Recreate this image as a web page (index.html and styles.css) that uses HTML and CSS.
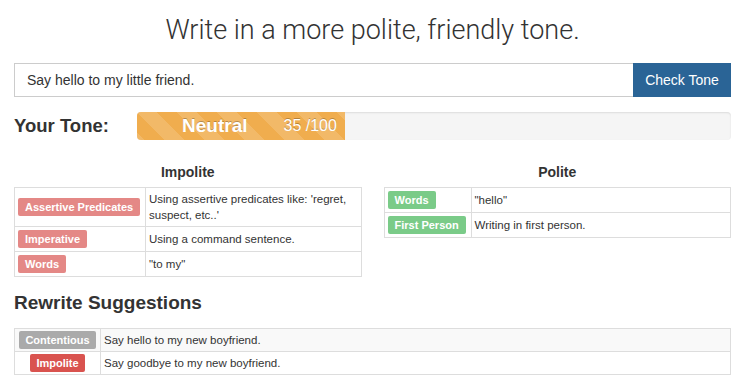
FILE: index.html
```html
<!DOCTYPE html>
<html lang="en">
<head>
  <meta charset="UTF-8">
  <meta name="viewport" content="width=device-width, initial-scale=1.0">
  <title>Tone Checker</title>
  <link rel="stylesheet" href="styles.css">
</head>
<body>
  <div class="page">
    <h1 class="title">Write in a more polite, friendly tone.</h1>

    <div class="input-group">
      <input type="text" class="text-input" value="Say hello to my little friend.">
      <button class="btn-check">Check Tone</button>
    </div>

    <div class="tone-row">
      <div class="tone-label">Your Tone:</div>
      <div class="progress">
        <div class="progress-bar" style="width: 35%">
          <span class="tone-name">Neutral</span>
          <span class="tone-score">35 /100</span>
        </div>
      </div>
    </div>

    <div class="columns">
      <div class="column">
        <h4 class="column-title">Impolite</h4>
        <table class="table">
          <tr>
            <td class="col-impolite"><span class="label label-bad">Assertive Predicates</span></td>
            <td>Using assertive predicates like: 'regret, suspect, etc..'</td>
          </tr>
          <tr>
            <td class="col-impolite"><span class="label label-bad">Imperative</span></td>
            <td>Using a command sentence.</td>
          </tr>
          <tr>
            <td class="col-impolite"><span class="label label-bad">Words</span></td>
            <td>"to my"</td>
          </tr>
        </table>
      </div>
      <div class="column">
        <h4 class="column-title">Polite</h4>
        <table class="table">
          <tr>
            <td class="col-polite"><span class="label label-good">Words</span></td>
            <td>"hello"</td>
          </tr>
          <tr>
            <td class="col-polite"><span class="label label-good">First Person</span></td>
            <td>Writing in first person.</td>
          </tr>
        </table>
      </div>
    </div>

    <h3 class="section-title">Rewrite Suggestions</h3>
    <table class="table table-striped">
      <tr>
        <td class="col-rewrite"><span class="label label-default">Contentious</span></td>
        <td>Say hello to my new boyfriend.</td>
      </tr>
      <tr>
        <td class="col-rewrite"><span class="label label-danger">Impolite</span></td>
        <td>Say goodbye to my new boyfriend.</td>
      </tr>
    </table>
  </div>
</body>
</html>
```

FILE: styles.css
```css
body {
  margin: 0;
  font-family: "Liberation Sans", Arial, sans-serif;
  color: #333;
  background-color: #fff;
}

.page {
  width: 717px;
  margin-left: 14px;
}

.title {
  margin: 12px 0 0;
  font-family: Roboto, "Liberation Sans", sans-serif;
  font-weight: 300;
  font-size: 27px;
  line-height: 36px;
  text-align: center;
}

.input-group {
  display: flex;
  margin-top: 15px;
  height: 34px;
}

.text-input {
  flex: 1;
  box-sizing: border-box;
  height: 34px;
  margin: 0;
  padding: 0 12px;
  border: 1px solid #ccc;
  border-right: none;
  font-family: "Liberation Sans", Arial, sans-serif;
  font-size: 14px;
  color: #333;
  outline: none;
}

.btn-check {
  width: 98px;
  height: 34px;
  border: none;
  background-color: #2a6496;
  color: #fff;
  font-family: "Liberation Sans", Arial, sans-serif;
  font-size: 14px;
  cursor: pointer;
}

.tone-row {
  display: flex;
  align-items: center;
  margin-top: 15px;
}

.tone-label {
  width: 123px;
  font-size: 18.5px;
  font-weight: bold;
}

.progress {
  flex: 1;
  height: 28px;
  background-color: #f5f5f5;
  border-radius: 4px;
  box-shadow: inset 0 1px 2px rgba(0, 0, 0, 0.1);
  overflow: hidden;
}

.progress-bar {
  height: 100%;
  display: flex;
  align-items: center;
  justify-content: flex-end;
  gap: 36px;
  padding-right: 8px;
  box-sizing: border-box;
  background-color: #f0ad4e;
  background-image: linear-gradient(45deg, rgba(255, 255, 255, 0.15) 25%, transparent 25%, transparent 50%, rgba(255, 255, 255, 0.15) 50%, rgba(255, 255, 255, 0.15) 75%, transparent 75%, transparent);
  background-size: 40px 40px;
  color: #fff;
  text-shadow: 0 -1px 0 rgba(0, 0, 0, 0.25);
}

.tone-name {
  font-size: 19px;
  font-weight: bold;
}

.tone-score {
  font-size: 16px;
}

.columns {
  display: flex;
  gap: 22px;
  margin-top: 22px;
  align-items: flex-start;
}

.column {
  flex: 1;
}

.column-title {
  margin: 0 0 5px;
  font-size: 14px;
  line-height: 20px;
  text-align: center;
}

.table {
  width: 100%;
  border-collapse: collapse;
  border: 1px solid #ddd;
  font-size: 11.5px;
}

.table td {
  border: 1px solid #ddd;
  padding: 3px 3px;
  line-height: 16px;
  vertical-align: middle;
}

.table-striped tr:nth-child(odd) td {
  background-color: #f9f9f9;
}

.table-striped td {
  padding: 2px 3px;
}

.col-impolite {
  width: 124px;
}

.col-polite {
  width: 80px;
}

.col-rewrite {
  width: 79px;
  text-align: center;
}

.label {
  display: inline-block;
  height: 18px;
  line-height: 18px;
  padding: 0 7px;
  border-radius: 2px;
  color: #fff;
  font-size: 11px;
  font-weight: bold;
  white-space: nowrap;
  vertical-align: middle;
}

.label-bad {
  background-color: #e48886;
}

.label-good {
  background-color: #7acb88;
}

.label-default {
  background-color: #aaa;
  padding: 0 6px;
}

.label-danger {
  background-color: #d9534f;
  padding: 0 6px;
}

.section-title {
  margin: 14px 0 13px;
  font-size: 19px;
  line-height: 24px;
}
```
